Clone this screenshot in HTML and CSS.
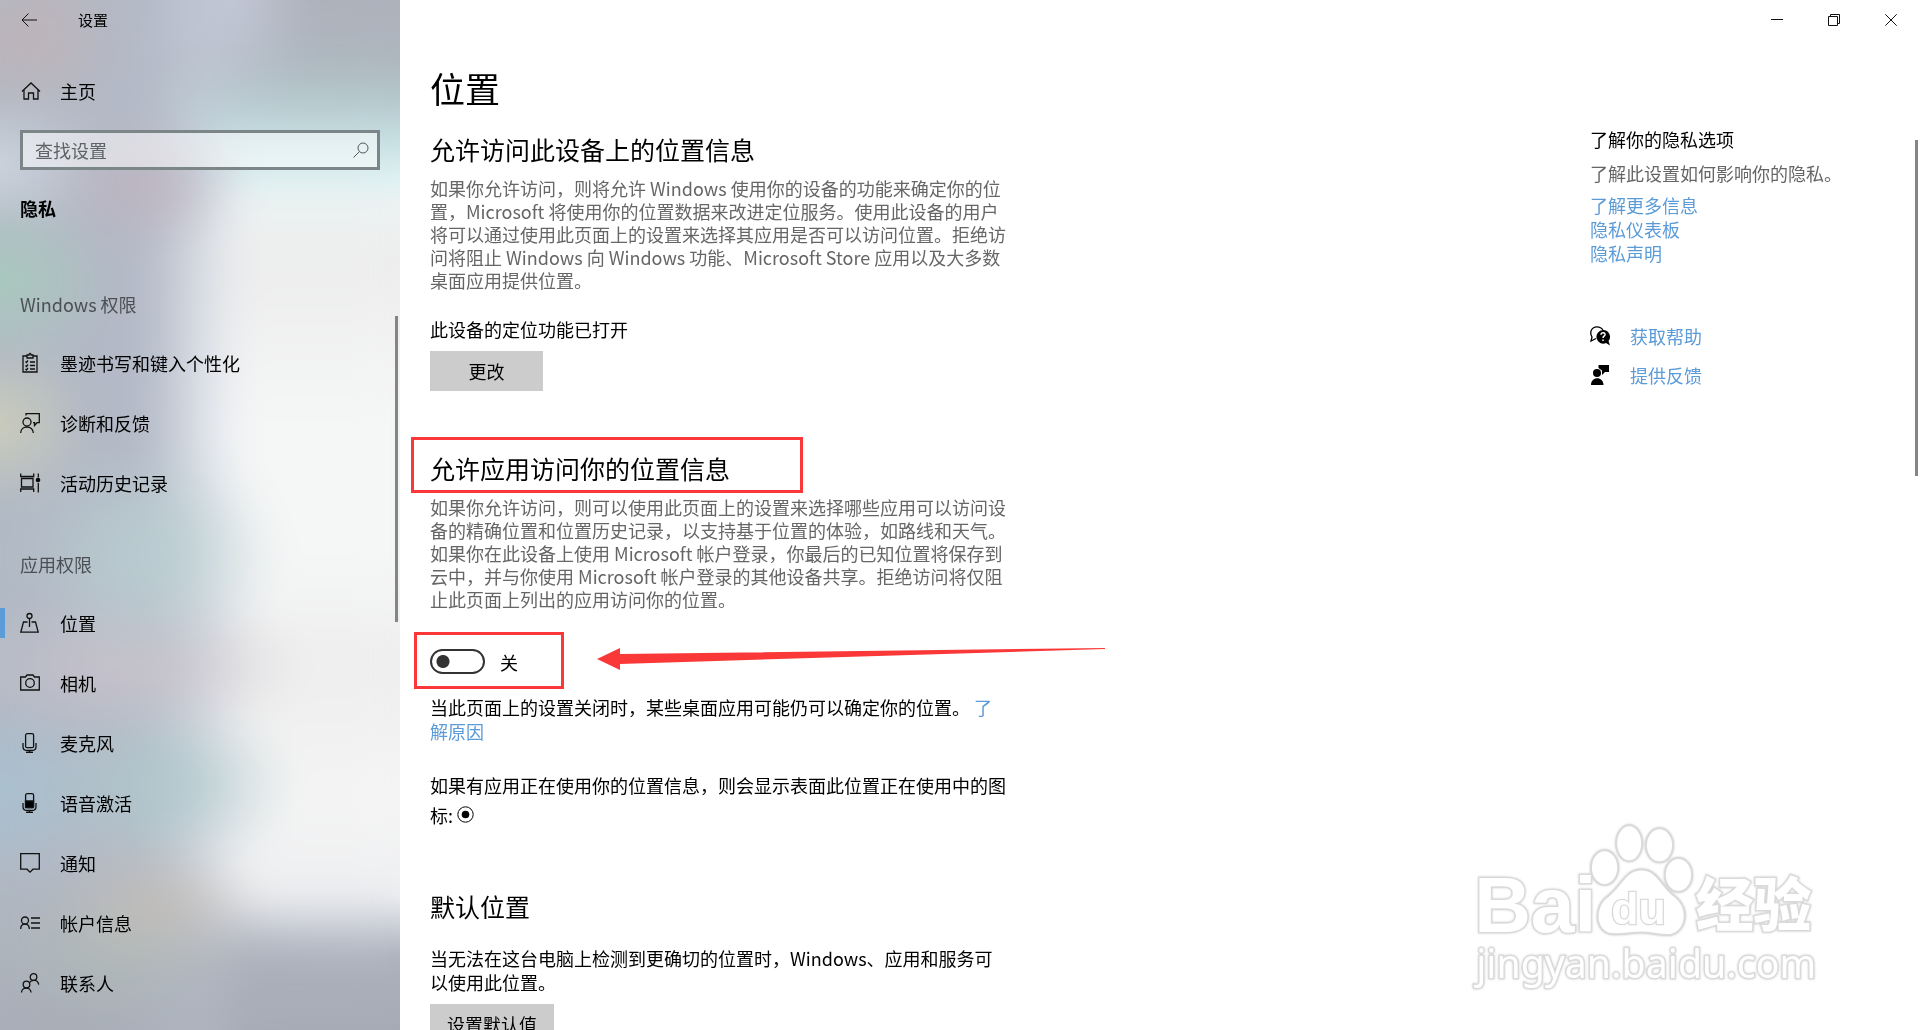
FILE: index.html
```html
<!DOCTYPE html>
<html lang="zh-CN">
<head>
<meta charset="utf-8">
<title>设置</title>
<link rel="stylesheet" href="styles.css">
</head>
<body>
<div class="window">
  <aside class="sidebar">
    <header class="sidebar-top">
      <button class="back" type="button" aria-label="返回">
        <svg width="16" height="14" viewBox="0 0 16 14"><path d="M7.500.5 1 7l6.500 6.500M1 7h15"/></svg>
      </button>
      <span class="app-name">设置</span>
    </header>
    <a class="home" href="#home">
      <svg class="icon" width="20" height="20" viewBox="0 0 20 20"><path d="M2 10.500 11 2l9 8.500M4 9v9h4.500v-6h5v6H18V9"/></svg>
      <span>主页</span>
    </a>
    <div class="search">
      <input type="text" placeholder="查找设置" aria-label="查找设置">
      <svg class="icon" width="16" height="16" viewBox="0 0 16 16"><circle cx="10" cy="6" r="5"/><path d="M6.500 9.500.5 15.500"/></svg>
    </div>
    <h2 class="section">隐私</h2>
    <nav class="nav">
      <h3>Windows 权限</h3>
      <a href="#ink"><svg class="icon" width="20" height="20" viewBox="0 0 20 20"><path d="M7 3H3v16h14V3h-4M7 5V2h2c0-2 2-2 2 0h2v3zM5.500 8.500l1 1L8 7.500M5.500 12.500l1 1 1.500-2M5.500 16l1 1 1.500-2M10 9h5M10 12.500h5M10 16h5"/></svg><span>墨迹书写和键入个性化</span></a>
      <a href="#diagnostics"><svg class="icon" width="20" height="20" viewBox="0 0 20 20"><circle cx="7" cy="9" r="4"/><path d="M.7 20c0-8 12.600-8 12.600 0M6 2.500V.7h13.300v9H17l-2.500 2.800V9.700H13"/></svg><span>诊断和反馈</span></a>
      <a href="#activity"><svg class="icon" width="20" height="20" viewBox="0 0 20 20"><path d="M.7.500v3h13v-3M.7 19v-3h13v3M1.500 5.500H13v8.500H1.500zM18.300.500v4M18.300 10v9.500"/><circle class="solid" cx="18" cy="7" r="1.700"/></svg><span>活动历史记录</span></a>
      <h3>应用权限</h3>
      <a class="current" href="#location" aria-current="page"><svg class="icon" width="20" height="20" viewBox="0 0 20 20"><circle cx="9.500" cy="3" r="2.500"/><path d="M9.500 5.500V14M7.500 9H3.500L.8 19.200h17.400L15.500 9h-4"/></svg><span>位置</span></a>
      <a href="#camera"><svg class="icon" width="20" height="20" viewBox="0 0 20 20"><path d="M.7 4h4.800L7 2h6l1.500 2h4.800v13H.7z"/><circle cx="10" cy="10" r="4.300"/></svg><span>相机</span></a>
      <a href="#microphone"><svg class="icon" width="20" height="20" viewBox="0 0 20 20"><rect x="5.600" y=".7" width="8" height="14" rx="1.500"/><path d="M3 10v3.500q0 4 4 4h5q4 0 4-4V10M9.500 17.500v2M6 19.400h7"/></svg><span>麦克风</span></a>
      <a href="#voice"><svg class="icon" width="20" height="20" viewBox="0 0 20 20"><rect x="5.600" y=".7" width="8" height="14" rx="1.500"/><path class="solid" d="M5.500 8h8v6.500h-8z"/><path d="M3 10v3.500q0 4 4 4h5q4 0 4-4V10M9.500 17.500v2M6 19.400h7"/></svg><span>语音激活</span></a>
      <a href="#notifications"><svg class="icon" width="20" height="20" viewBox="0 0 20 20"><path d="M.7.7h18.600v15.500H13l-3 3-3-3H.7z"/></svg><span>通知</span></a>
      <a href="#account"><svg class="icon" width="20" height="20" viewBox="0 0 20 20"><circle cx="5" cy="7.500" r="3.500"/><path d="M.7 16c0-6.500 8.600-6.500 8.600 0M11 5h9M11 10h9M11 15h9"/></svg><span>帐户信息</span></a>
      <a href="#contacts"><svg class="icon" width="20" height="20" viewBox="0 0 20 20"><circle cx="13.500" cy="4" r="3.300"/><circle cx="6.500" cy="11.500" r="3.300"/><path d="M1.500 19.500c0-6 9.500-6 9.500 0M9.500 9.500c2-3 8.500-3.500 9.200 2.200"/></svg><span>联系人</span></a>
    </nav>
    <div class="scrollbar nav-scroll"></div>
  </aside>

  <div class="page">
    <header class="titlebar">
      <button type="button" aria-label="最小化"><svg width="12" height="12" viewBox="0 0 12 12"><path d="M0 5.500h12"/></svg></button>
      <button type="button" aria-label="还原"><svg width="12" height="12" viewBox="0 0 12 12"><path d="M.5 2.500h9v9h-9zM2.500 2.500v-2h9v9h-2"/></svg></button>
      <button type="button" aria-label="关闭"><svg width="12" height="12" viewBox="0 0 12 12"><path d="m.3.300 11.400 11.400M11.700.3.300 11.700"/></svg></button>
    </header>
    <div class="columns">
      <main class="content">
        <h1>位置</h1>
        <section>
          <h2>允许访问此设备上的位置信息</h2>
          <p class="description">如果你允许访问，则将允许 Windows 使用你的设备的功能来确定你的位置，Microsoft 将使用你的位置数据来改进定位服务。使用此设备的用户将可以通过使用此页面上的设置来选择其应用是否可以访问位置。拒绝访问将阻止 Windows 向 Windows 功能、Microsoft Store 应用以及大多数桌面应用提供位置。</p>
          <p class="status">此设备的定位功能已打开</p>
          <button class="action" type="button">更改</button>
        </section>
        <section class="app-access">
          <h2 class="marked">允许应用访问你的位置信息</h2>
          <p class="description">如果你允许访问，则可以使用此页面上的设置来选择哪些应用可以访问设备的精确位置和位置历史记录，以支持基于位置的体验，如路线和天气。如果你在此设备上使用 Microsoft 帐户登录，你最后的已知位置将保存到云中，并与你使用 Microsoft 帐户登录的其他设备共享。拒绝访问将仅阻止此页面上列出的应用访问你的位置。</p>
          <div class="switch-row">
            <input type="checkbox" role="switch" id="app-location">
            <label for="app-location">关</label>
            <svg class="arrow" width="510" height="24" viewBox="0 0 510 24"><path d="M0 12 23 1v6L508 1v1L23 17v6z"/></svg>
          </div>
          <p class="note">当此页面上的设置关闭时，某些桌面应用可能仍可以确定你的位置。 <a href="#why">了解原因</a></p>
          <p class="indicator">如果有应用正在使用你的位置信息，则会显示表面此位置正在使用中的图标: <svg width="17" height="17" viewBox="0 0 17 17"><circle class="ring" cx="8.500" cy="8.500" r="7.700"/><circle cx="8.500" cy="8.500" r="3.800"/></svg></p>
        </section>
        <section class="default-location">
          <h2>默认位置</h2>
          <p>当无法在这台电脑上检测到更确切的位置时，Windows、应用和服务可<br>以使用此位置。</p>
          <button class="action wide" type="button">设置默认值</button>
        </section>
      </main>
      <aside class="related">
        <h3>了解你的隐私选项</h3>
        <p>了解此设置如何影响你的隐私。</p>
        <ul class="links">
          <li><a href="#more">了解更多信息</a></li>
          <li><a href="#dashboard">隐私仪表板</a></li>
          <li><a href="#statement">隐私声明</a></li>
        </ul>
        <ul class="support">
          <li><svg width="20" height="20" viewBox="0 0 20 20"><path class="line" d="M6 12.500 1 15l1-4C-1 6 2 .8 6.800.8c3 0 5 1.200 6 3.200"/><path d="M13 4a6.800 6.800 0 1 0 3 13l4 2.500-1.500-4.500A6.800 6.800 0 0 0 13 4z"/><path class="query" d="M11 8.700c0-2.700 4.500-2.500 4 .2-.3 1.300-2 1.300-2 3M13 13.500v1.600"/></svg><a href="#help">获取帮助</a></li>
          <li><svg width="20" height="20" viewBox="0 0 20 20"><circle cx="7" cy="8" r="4"/><path d="M1 20c0-9 12.500-9 12.500 0zM8.500 0H19v7h-4l-3 3V5.500L8.500 3z"/></svg><a href="#feedback">提供反馈</a></li>
        </ul>
      </aside>
    </div>
    <div class="scrollbar page-scroll"></div>
    <svg class="watermark" width="353" height="173" viewBox="60 60 1060 520">
      <text class="bai" x="72" y="397">Bai</text>
      <ellipse cx="464" cy="203" rx="41" ry="52"/>
      <ellipse cx="538" cy="130" rx="39" ry="54"/>
      <ellipse cx="629" cy="136" rx="41" ry="51"/>
      <ellipse cx="686" cy="225" rx="41" ry="51"/>
      <path d="M575 209c50 0 60 52 100 80 52 40 32 117-23 117-32 0-45-8-77-8s-60 7-88 5c-55-5-58-85-12-115 38-28 50-79 100-79z"/>
      <text class="du" x="484" y="372">du</text>
      <text class="jingyan" x="738" y="380">经验</text>
      <text class="host" x="78" y="535">jingyan.baidu.com</text>
    </svg>
  </div>
</div>
</body>
</html>
```
FILE: styles.css
```css
*, *::before, *::after { box-sizing: border-box; }

body {
  margin: 0;
  color: #000;
  background: #fff;
  font: 18px/24px "Noto Sans CJK SC", sans-serif;
}

h1, h2, h3, p, ul { margin: 0; padding: 0; font-weight: inherit; }
ul { list-style: none; }
a { color: #5a9bd8; text-decoration: none; }
button, input { font: inherit; color: inherit; border: 0; border-radius: 0; }

.window { display: flex; height: 100vh; overflow: hidden; }

/* Sidebar */
.sidebar {
  position: relative;
  z-index: 0;
  flex: 0 0 400px;
  background:
    radial-gradient(ellipse 110px 80px at 0 280px, #a8cabd, #a8cabd00),
    radial-gradient(ellipse 90px 80px at 0 425px, #cccdbb, #cccdbb00),
    radial-gradient(ellipse 130px 110px at 150px 555px, #b9ced1, #b9ced100),
    radial-gradient(ellipse 130px 90px at 165px 785px, #b0c8cc, #b0c8cc00),
    radial-gradient(ellipse 120px 90px at 0 790px, #a9c0d0, #a9c0d000),
    radial-gradient(ellipse 170px 80px at 130px 665px, #c8c2cb, #c8c2cb00),
    radial-gradient(ellipse 110px 70px at 155px 905px, #c1bdb9, #c1bdb900),
    radial-gradient(ellipse 120px 70px at 110px 950px, #afb9b7, #afb9b700),
    radial-gradient(ellipse 100px 70px at 145px 185px, #bdb4c0, #bdb4c000),
    radial-gradient(ellipse 90px 80px at 35px 40px, #bfb3b8, #bfb3b800),
    radial-gradient(ellipse 110px 70px at 0 165px, #ced5df, #ced5df00),
    radial-gradient(ellipse 80px 110px at 230px 10px, #c2c8d6, #c2c8d600),
    radial-gradient(ellipse 300px 170px at 60px 1030px, #a8adb6, #a8adb600),
    linear-gradient(to right, #b1b9c4 0, #b3b9c6 140px, #bbc2cfcc 175px, #c9d0df66 210px, #c9d0df00 245px),
    linear-gradient(#aeb1bb 0, #adb6be 60px, #b5c8cc 100px, #c8e2e5 145px, #e0f2f3 180px, #eef2f2 205px, #ededed 260px, #f5f6f6 420px, #f5f6f6 560px, #eee 660px, #f4f4f4 800px, #eeeff1 895px, #cfd3db 922px, #adb1bc 955px, #a5abb5 1030px);
}
.sidebar::before {
  content: "";
  position: absolute;
  z-index: -1;
  inset: 0;
  backdrop-filter: blur(18px);
}

.sidebar-top { display: flex; align-items: center; height: 40px; }
.back {
  display: grid;
  place-items: center;
  width: 58px;
  height: 40px;
  margin-right: 20px;
  padding: 0;
  background: none;
}
.back svg, .icon, .titlebar svg { fill: none; stroke: #111; }
.icon { flex: none; stroke-width: 1.3; overflow: visible; }
.icon .solid { fill: #000; }
.app-name { font-size: 15px; }

.home {
  display: flex;
  align-items: center;
  gap: 20px;
  height: 60px;
  margin-top: 21px;
  padding-left: 20px;
  color: inherit;
}

.search {
  display: flex;
  align-items: center;
  height: 40px;
  margin: 9px 20px 0;
  padding: 0 8px 0 12px;
  border: 3px solid #7c8588;
  background: #ffffff80;
}
.search input { flex: 1; min-width: 0; padding: 0; background: none; outline: 0; }
.search input::placeholder { color: #5f6366; opacity: 1; }
.search .icon { stroke: #555; stroke-width: 1; }

.section { margin: 26px 20px 0; font-size: 18px; font-weight: 700; }

.nav { padding-top: 56px; }
.nav h3 { height: 56px; padding-left: 20px; font-size: 18px; line-height: 56px; color: #4c5054; }
.nav h3 + a { margin-top: 1px; }
.nav a + h3 { margin-top: 23px; }
.nav a {
  display: flex;
  align-items: center;
  gap: 20px;
  height: 60px;
  padding-left: 20px;
  color: inherit;
}
.nav .current {
  background: linear-gradient(#5a9bd8, #5a9bd8) 0 15px / 5px 30px no-repeat;
}

.scrollbar { position: absolute; width: 3px; background: #858585; }
.nav-scroll { top: 316px; right: 2px; height: 306px; }
.page-scroll { top: 140px; right: 2px; height: 336px; }

/* Main page */
.page { position: relative; flex: 1; min-width: 0; }
.titlebar { display: flex; justify-content: flex-end; height: 40px; padding-right: 1px; }
.titlebar button {
  display: grid;
  place-items: center;
  width: 57px;
  height: 40px;
  padding: 0;
  background: none;
}
.columns { display: flex; justify-content: space-between; }
.content { width: 608px; padding: 24px 0 0 30px; }
h1 { font-size: 35px; line-height: 48px; margin-bottom: 19px; }
.content h2 { font-size: 25px; line-height: 36px; }
.description { margin-top: 10px; line-height: 23px; color: #666; }
.status { margin-top: 25px; }
.action {
  display: block;
  width: 113px;
  height: 40px;
  margin-top: 10px;
  padding: 0;
  background: #ccc;
}
.action.wide { width: 124px; }

.app-access { margin-top: 59px; }
.marked { position: relative; }
.marked::after, .switch-row::after {
  content: "";
  position: absolute;
  border: 3px solid #fb3838;
  pointer-events: none;
}
.marked::after { top: -13px; left: -19px; width: 392px; height: 56px; }

.switch-row { position: relative; display: flex; align-items: center; gap: 15px; height: 25px; margin-top: 38px; }
.switch-row::after { top: -17px; left: -16px; width: 150px; height: 57px; }
.switch-row input {
  appearance: none;
  width: 55px;
  height: 25px;
  margin: 0;
  border: 2px solid #333;
  border-radius: 13px;
  background: radial-gradient(circle at 11px 50%, #333 6px, #3330 7px);
}
.arrow { position: absolute; top: -2px; left: 167px; fill: #fb3838; }

.note { margin-top: 21px; }
.indicator { margin-top: 27px; line-height: 30px; }
.indicator .ring { fill: none; stroke: #000; }
.default-location { margin-top: 58px; }
.default-location p { margin-top: 22px; }

/* Right column */
.related { width: 330px; padding-top: 87px; }
.related h3 { font-size: 18px; }
.related p { margin-top: 10px; color: #666; }
.links { margin-top: 8px; }
.support { margin-top: 51px; }
.support li { display: flex; align-items: center; gap: 20px; height: 39px; }
.support .line { fill: none; stroke: #000; stroke-width: 1.3; }
.support .query { fill: none; stroke: #fff; stroke-width: 1.5; }

.watermark {
  position: absolute;
  right: 97px;
  bottom: 37px;
  overflow: visible;
  fill: #fff;
  stroke: #dadada;
  stroke-width: 6;
  filter: drop-shadow(0 0 1px #ccc);
}
.watermark text { paint-order: stroke; stroke-width: 8; }
.bai { font: 700 236px "Liberation Sans", sans-serif; }
.du { font: 700 134px "Liberation Sans", sans-serif; }
.jingyan { font: 900 174px "Noto Sans CJK SC", sans-serif; }
.host { font: 400 118px "Noto Sans", sans-serif; }
```
